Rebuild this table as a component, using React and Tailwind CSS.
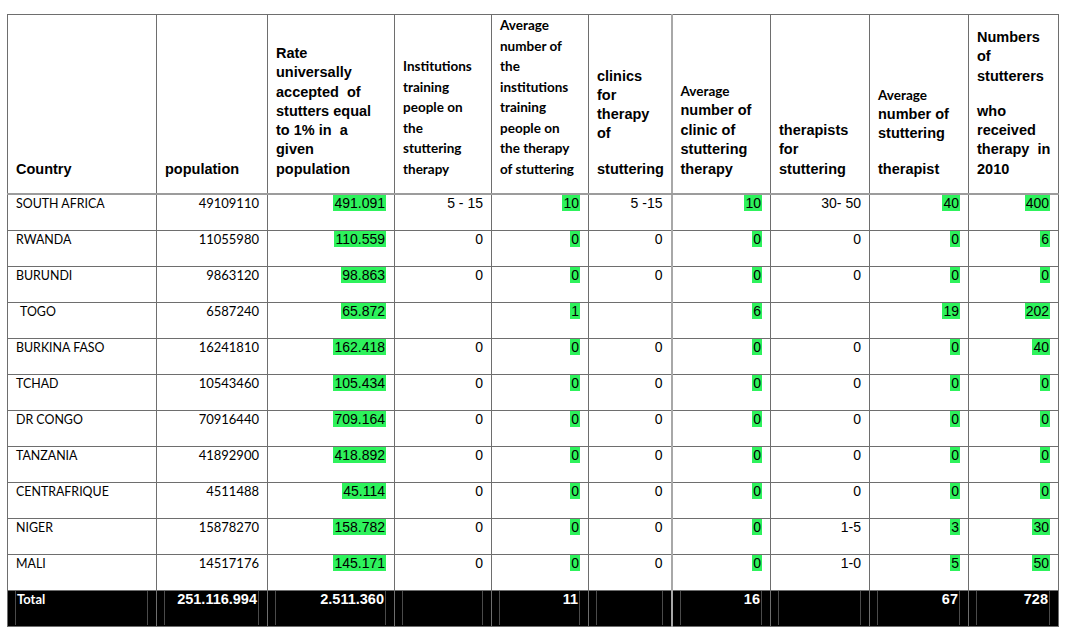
const HELV = "font-['Liberation_Sans',Arial,sans-serif]";
const CAL = "font-['Lato','Noto_Sans',sans-serif]";

const rows = [
  [" SOUTH AFRICA", "49109110", "491.091", "5 - 15", "10", "5 -15", "10", "30- 50", "40", "400"],
  ["RWANDA", "11055980", "110.559", "0", "0", "0", "0", "0", "0", "6"],
  ["BURUNDI", "9863120", "98.863", "0", "0", "0", "0", "0", "0", "0"],
  ["TOGO", "6587240", "65.872", "", "1", "", "6", "", "19", "202"],
  ["BURKINA FASO", "16241810", "162.418", "0", "0", "0", "0", "0", "0", "40"],
  ["TCHAD", "10543460", "105.434", "0", "0", "0", "0", "0", "0", "0"],
  ["DR CONGO", "70916440", "709.164", "0", "0", "0", "0", "0", "0", "0"],
  ["TANZANIA", "41892900", "418.892", "0", "0", "0", "0", "0", "0", "0"],
  ["CENTRAFRIQUE", "4511488", "45.114", "0", "0", "0", "0", "0", "0", "0"],
  ["NIGER", "15878270", "158.782", "0", "0", "0", "0", "1-5", "3", "30"],
  ["MALI", "14517176", "145.171", "0", "0", "0", "0", "1-0", "5", "50"],
];

// columns whose numbers are marked in green
const green = [2, 4, 6, 8, 9];

const totals = ["Total", "251.116.994", "2.511.360", "", "11", "", "16", "", "67", "728"];

const widths = [149, 111, 127, 97, 97, 83, 99, 99, 99, 90];

function Gap() {
  return <div className="h-[16px]" />;
}

function HeadCell({ children, className = "" }) {
  return (
    <th
      className={`border border-[#6e6e6e] border-b-2 border-b-[#9c9c9c] align-bottom text-left font-bold text-black pl-[8px] pr-[2px] pb-[14px] ${className}`}
    >
      {children}
    </th>
  );
}

export default function App() {
  return (
    <div className="min-h-screen bg-white pt-[14px] pl-[7px]">
      <table className="table-fixed border-collapse w-[1051px]">
        <colgroup>
          {widths.map((w, i) => (
            <col key={i} style={{ width: w }} />
          ))}
        </colgroup>
        <thead>
          <tr className="h-[177px]">
            <HeadCell className={`${HELV} text-[14.5px] leading-[19px]`}>Country</HeadCell>
            <HeadCell className={`${HELV} text-[14.5px] leading-[19px]`}>population</HeadCell>
            <HeadCell className={`${HELV} text-[14.5px] leading-[19.3px]`}>
              Rate
              <br />
              universally
              <br />
              accepted&nbsp; of
              <br />
              stutters equal
              <br />
              to 1% in&nbsp; a
              <br />
              given
              <br />
              population
            </HeadCell>
            <HeadCell className={`${CAL} text-[13.5px] leading-[20.5px]`}>
              Institutions
              <br />
              training
              <br />
              people on
              <br />
              the
              <br />
              stuttering
              <br />
              therapy
            </HeadCell>
            <HeadCell className={`${CAL} text-[13.5px] leading-[20.5px]`}>
              Average
              <br />
              number of
              <br />
              the
              <br />
              institutions
              <br />
              training
              <br />
              people on
              <br />
              the therapy
              <br />
              of stuttering
            </HeadCell>
            <HeadCell className={`${HELV} text-[14.5px] leading-[19.3px] border-r-2 border-r-[#a8a8a8]`}>
              clinics
              <br />
              for
              <br />
              therapy
              <br />
              of
              <Gap />
              stuttering
            </HeadCell>
            <HeadCell className={`${HELV} text-[14.5px] leading-[19.5px]`}>
              <span className={`${CAL} text-[13.5px]`}>Average</span>
              <br />
              number of
              <br />
              clinic of
              <br />
              stuttering
              <br />
              therapy
            </HeadCell>
            <HeadCell className={`${HELV} text-[14.5px] leading-[19.3px]`}>
              therapists
              <br />
              for
              <br />
              stuttering
            </HeadCell>
            <HeadCell className={`${HELV} text-[14.5px] leading-[19.3px]`}>
              <span className={`${CAL} text-[13.5px]`}>Average</span>
              <br />
              number of
              <br />
              stuttering
              <Gap />
              therapist
            </HeadCell>
            <HeadCell className={`${HELV} text-[14.5px] leading-[19.3px]`}>
              Numbers
              <br />
              of
              <br />
              stutterers
              <Gap />
              who
              <br />
              received
              <br />
              therapy&nbsp; in
              <br />
              2010
            </HeadCell>
          </tr>
        </thead>
        <tbody>
          {rows.map((r, ri) => (
            <tr key={ri} className="h-[36px]">
              {r.map((v, ci) => {
                const base = "border border-[#6e6e6e] align-top pt-0 text-black";
                const sep = ci === 5 ? " border-r-2 border-r-[#a8a8a8]" : "";
                if (ci === 0) {
                  return (
                    <td
                      key={ci}
                      className={`${base}${sep} ${CAL} text-[12.4px] leading-[17px] ${
                        v === "TOGO" ? "pl-[12px]" : "pl-[8px]"
                      }`}
                    >
                      {v.trim()}
                    </td>
                  );
                }
                if (ci === 1) {
                  return (
                    <td key={ci} className={`${base}${sep} ${CAL} text-[13px] leading-[17px] text-right pr-[8px]`}>
                      {v}
                    </td>
                  );
                }
                return (
                  <td key={ci} className={`${base}${sep} ${HELV} text-[14px] leading-[17px] text-right pr-[8px]`}>
                    {v !== "" && green.includes(ci) ? (
                      <span className="bg-[#2ef25c] px-px">{v}</span>
                    ) : (
                      v
                    )}
                  </td>
                );
              })}
            </tr>
          ))}
          <tr className="h-[36px]">
            {totals.map((v, ci) => (
              <td
                key={ci}
                className={`border border-[#6e6e6e] bg-black p-0 align-top ${
                  ci === 5 ? "border-r-2 border-r-[#a8a8a8]" : ""
                }`}
              >
                <div
                  className={`h-[34px] ml-[7px] mr-[8px] border-x border-[#4a4a4a] pt-0 text-white font-bold ${
                    ci === 0
                      ? `${CAL} text-[13px] leading-[17px] text-left pl-px`
                      : `${HELV} text-[14.5px] leading-[17px] text-right pr-px`
                  }`}
                >
                  {v}
                </div>
              </td>
            ))}
          </tr>
        </tbody>
      </table>
    </div>
  );
}
